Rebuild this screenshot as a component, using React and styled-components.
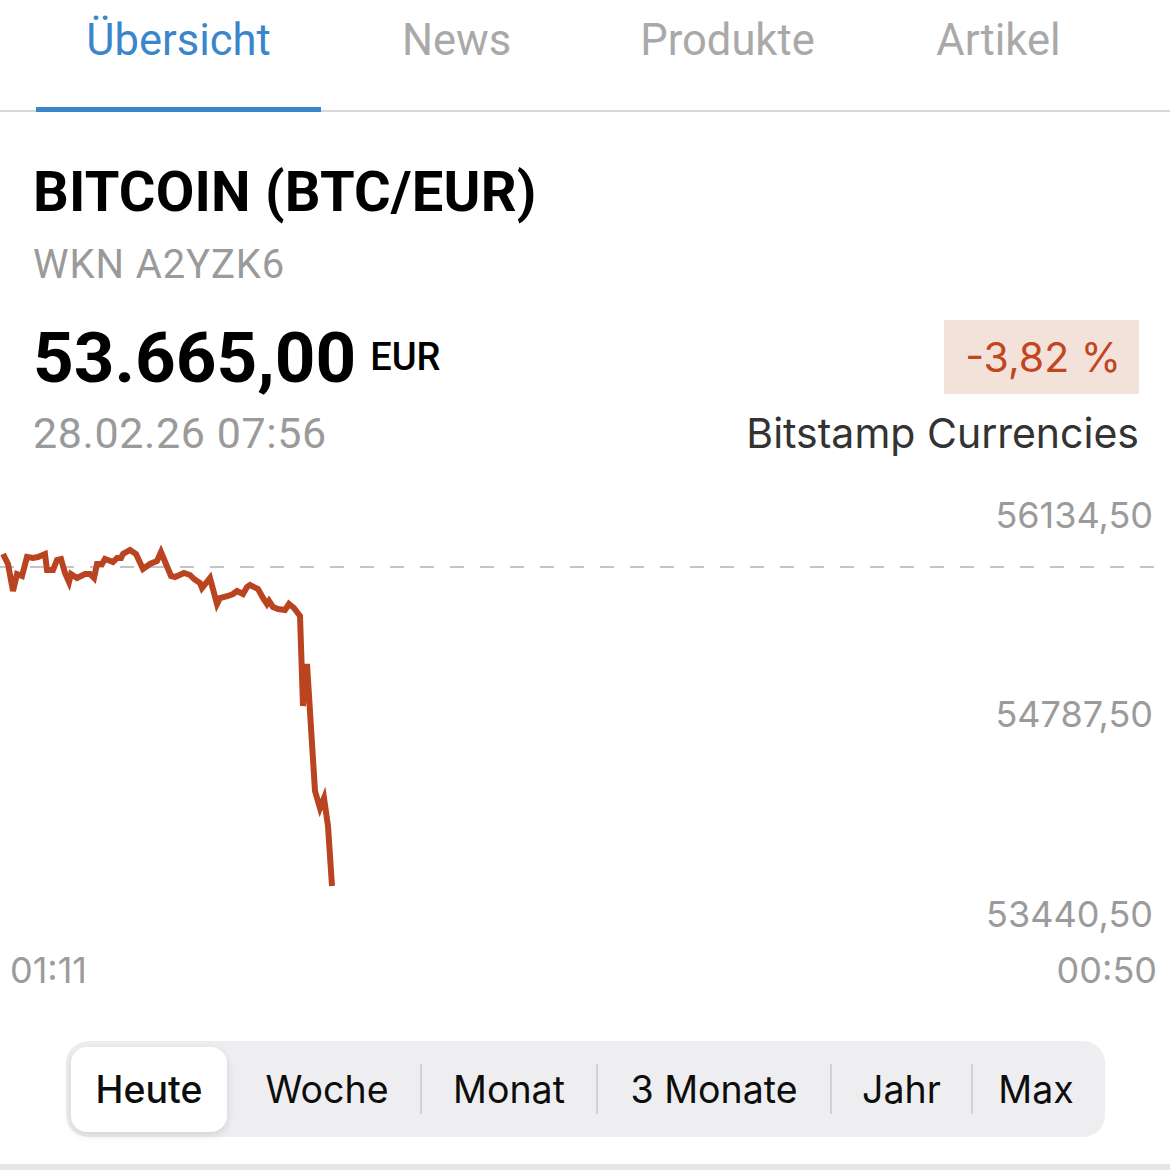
import React from "react";
import styled, { createGlobalStyle } from "styled-components";

const GlobalStyle = createGlobalStyle`
  body {
    margin: 0;
    background: #ffffff;
    font-family: Roboto, "Noto Sans", sans-serif;
  }
`;

const tabs = [
  { label: "Übersicht", width: 285, active: true },
  { label: "News", width: 271 },
  { label: "Produkte", width: 271 },
  { label: "Artikel", width: 271 },
];

const ranges = [
  { label: "Heute", width: 156, active: true },
  { label: "Woche", width: 194, shift: 6 },
  { label: "Monat", width: 176, divider: true },
  { label: "3 Monate", width: 234, divider: true },
  { label: "Jahr", width: 141, divider: true },
  { label: "Max", width: 128, divider: true },
];

// chart points in page coordinates
const points = [
  [3, 553], [8, 563], [13, 590], [17, 573], [22, 575], [27, 556], [33, 557],
  [38, 556], [45, 553], [47, 569], [53, 569], [57, 559], [61, 558], [65, 572],
  [69, 581], [71, 573], [77, 577], [85, 573], [90, 573], [94, 577], [97, 563],
  [102, 563], [105, 558], [113, 561], [117, 557], [121, 557], [123, 553],
  [130, 549], [136, 553], [143, 568], [150, 563], [157, 560], [161, 551],
  [166, 563], [171, 575], [175, 576], [184, 572], [190, 574], [194, 578],
  [200, 582], [202, 587], [210, 577], [217, 603], [220, 597], [228, 595],
  [233, 593], [237, 590], [243, 593], [247, 586], [250, 584], [258, 588],
  [263, 597], [267, 603], [269, 600], [273, 606], [278, 608], [285, 609],
  [289, 603], [294, 607], [300, 615], [303, 705], [307, 663], [315, 790],
  [320, 807], [324, 797], [328, 825], [332, 885],
];

const CHART_TOP = 470;
const CHART_HEIGHT = 540;

export default function App() {
  return (
    <>
      <GlobalStyle />
      <Page>
        <TabBar>
          {tabs.map((t) => (
            <Tab key={t.label} $width={t.width} $active={t.active}>
              {t.label}
            </Tab>
          ))}
        </TabBar>

        <Header>
          <Title>BITCOIN (BTC/EUR)</Title>
          <Wkn>WKN A2YZK6</Wkn>
          <QuoteRow>
            <div>
              <PriceLine>
                <Price>53.665,00</Price>
                <Currency>EUR</Currency>
              </PriceLine>
              <Stamp>28.02.26 07:56</Stamp>
            </div>
            <RightCol>
              <ChangeBadge>-3,82 %</ChangeBadge>
              <Exchange>Bitstamp Currencies</Exchange>
            </RightCol>
          </QuoteRow>
        </Header>

        <Chart>
          <svg
            width="1170"
            height={CHART_HEIGHT}
            viewBox={`0 ${CHART_TOP} 1170 ${CHART_HEIGHT}`}
          >
            <line
              x1="0"
              y1="566"
              x2="1156"
              y2="566"
              stroke="#c4c4c4"
              strokeWidth="2"
              strokeDasharray="14 16"
            />
            <polyline
              points={points.map((p) => p.join(",")).join(" ")}
              fill="none"
              stroke="#bb4420"
              strokeWidth="6"
              strokeLinejoin="miter"
            />
          </svg>
          <AxisLabel $top={514 - CHART_TOP}>56134,50</AxisLabel>
          <AxisLabel $top={713 - CHART_TOP}>54787,50</AxisLabel>
          <AxisLabel $top={913 - CHART_TOP}>53440,50</AxisLabel>
          <TimeLabel $side="left">01:11</TimeLabel>
          <TimeLabel $side="right">00:50</TimeLabel>
        </Chart>

        <Segment>
          {ranges.map((r) => (
            <SegmentItem
              key={r.label}
              $width={r.width}
              $active={r.active}
              $divider={r.divider}
              $shift={r.shift || 0}
            >
              {r.label}
            </SegmentItem>
          ))}
        </Segment>

        <BottomBar />
      </Page>
    </>
  );
}

const Page = styled.div`
  width: 1170px;
  height: 1170px;
  overflow: hidden;
  background: #fff;
`;

const TabBar = styled.div`
  display: flex;
  height: 110px;
  padding-left: 36px;
  border-bottom: 2px solid #d8d8d8;
`;

const Tab = styled.div`
  position: relative;
  width: ${(p) => p.$width}px;
  text-align: center;
  font-size: 43.5px;
  line-height: 82px;
  color: ${(p) => (p.$active ? "#3b86cb" : "#a9a9a9")};

  &::after {
    content: "";
    display: ${(p) => (p.$active ? "block" : "none")};
    position: absolute;
    left: 0;
    right: 0;
    bottom: -2px;
    height: 5px;
    background: #3b86cb;
  }
`;

const Header = styled.div`
  padding: 0 31px 0 33px;
`;

const Title = styled.h1`
  margin: 52px 0 0;
  font-size: 56px;
  line-height: 56px;
  font-weight: 700;
  color: #000;
  letter-spacing: 0.2px;
`;

const Wkn = styled.div`
  margin-top: 25px;
  font-size: 40px;
  line-height: 40px;
  letter-spacing: 0.9px;
  color: #9a9a9a;
`;

const QuoteRow = styled.div`
  display: flex;
  justify-content: space-between;
  margin-top: 35px;
`;

const PriceLine = styled.div`
  display: flex;
  align-items: baseline;
  gap: 14px;
  margin-top: 4px;
`;

const Price = styled.span`
  font-size: 71px;
  line-height: 68px;
  font-weight: 700;
  color: #000;
`;

const Currency = styled.span`
  font-size: 38px;
  font-weight: 500;
  color: #000;
  position: relative;
  top: -12px;
`;

const Stamp = styled.div`
  margin-top: 19px;
  font-size: 43px;
  line-height: 44px;
  letter-spacing: 0.6px;
  color: #9a9a9a;
`;

const RightCol = styled.div`
  display: flex;
  flex-direction: column;
  align-items: flex-end;
`;

const ChangeBadge = styled.div`
  height: 74px;
  padding: 0 18px 0 21px;
  display: flex;
  align-items: center;
  background: #f3e2da;
  color: #c1461f;
  font-family: Inter, "Noto Sans", sans-serif;
  font-size: 41px;
`;

const Exchange = styled.div`
  margin-top: 19px;
  font-family: Inter, "Noto Sans", sans-serif;
  font-size: 41px;
  line-height: 40px;
  color: #333;
`;

const Chart = styled.div`
  position: relative;
  margin-top: 16px;
  height: ${CHART_HEIGHT}px;

  svg {
    display: block;
  }
`;

const AxisLabel = styled.div`
  position: absolute;
  right: 17px;
  top: ${(p) => p.$top - 18}px;
  font-family: Inter, "Noto Sans", sans-serif;
  font-size: 36px;
  line-height: 36px;
  color: #9b9b9b;
`;

const TimeLabel = styled.div`
  position: absolute;
  top: ${969 - CHART_TOP - 18}px;
  ${(p) => (p.$side === "left" ? "left: 10px;" : "right: 13px;")}
  font-family: Inter, "Noto Sans", sans-serif;
  font-size: 36px;
  line-height: 36px;
  color: #9b9b9b;
`;

const Segment = styled.div`
  display: flex;
  width: 1039px;
  height: 96px;
  box-sizing: border-box;
  margin: 30px 0 0 66px;
  padding: 6px 5px 5px;
  border-radius: 22px;
  background: #eeeef0;
`;

const SegmentItem = styled.div`
  position: relative;
  box-sizing: border-box;
  width: ${(p) => p.$width}px;
  padding-left: ${(p) => p.$shift}px;
  display: flex;
  align-items: center;
  justify-content: center;
  font-family: Inter, "Noto Sans", sans-serif;
  font-size: 37.5px;
  font-weight: ${(p) => (p.$active ? 500 : 400)};
  color: #0d0d0d;
  border-radius: 16px;
  background: ${(p) => (p.$active ? "#fff" : "transparent")};
  box-shadow: ${(p) => (p.$active ? "0 3px 8px rgba(0,0,0,0.12)" : "none")};

  &::before {
    content: "";
    display: ${(p) => (p.$divider ? "block" : "none")};
    position: absolute;
    left: -1px;
    top: 17px;
    width: 2px;
    height: 50px;
    background: #d2d2d6;
  }
`;

const BottomBar = styled.div`
  margin-top: 27px;
  height: 10px;
  background: #e6e6e6;
`;
